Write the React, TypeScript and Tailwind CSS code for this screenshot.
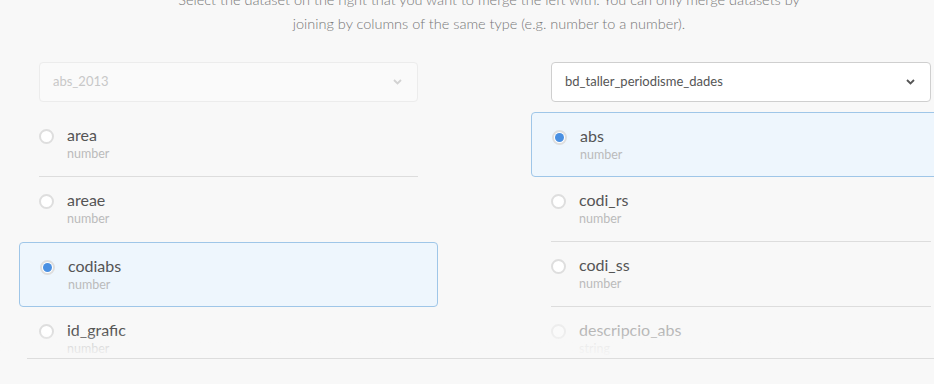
import React from 'react';

type Col = { name: string; type: string; selected?: boolean; disabled?: boolean };

const leftCols: Col[] = [
  { name: 'area', type: 'number' },
  { name: 'areae', type: 'number' },
  { name: 'codiabs', type: 'number', selected: true },
  { name: 'id_grafic', type: 'number' },
];

const rightCols: Col[] = [
  { name: 'abs', type: 'number', selected: true },
  { name: 'codi_rs', type: 'number' },
  { name: 'codi_ss', type: 'number' },
  { name: 'descripcio_abs', type: 'string', disabled: true },
];

function Chevron({ muted }: { muted?: boolean }) {
  return (
    <svg width="9" height="6" viewBox="0 0 9 6" className="shrink-0">
      <path
        d="M1 1l3.5 3.5L8 1"
        fill="none"
        stroke={muted ? '#d2d2d2' : '#555'}
        strokeWidth="1.8"
      />
    </svg>
  );
}

function Select({ value, disabled }: { value: string; disabled?: boolean }) {
  return (
    <div
      className={`h-[40px] flex items-center justify-between pl-[13px] pr-[15px] rounded-[4px] border text-[13px] ${
        disabled ? 'bg-[#fafafa] border-[#ececec] text-[#c8c8c8]' : 'bg-white border-[#cfcfcf] text-[#555]'
      }`}
    >
      <span>{value}</span>
      <Chevron muted={disabled} />
    </div>
  );
}

function Radio({ checked }: { checked?: boolean }) {
  return (
    <span className="w-[15px] h-[15px] rounded-full border-2 border-[#dedede] bg-white flex items-center justify-center shrink-0">
      {checked && <span className="w-[9px] h-[9px] rounded-full bg-[#4a90e2]" />}
    </span>
  );
}

function ColumnList({ cols }: { cols: Col[] }) {
  return (
    <div className="flex flex-col">
      {cols.map((c, i) => {
        const nextSelected = cols[i + 1]?.selected;
        return (
          <div
            key={c.name}
            className={`h-[65px] shrink-0 flex items-start pt-[16px] gap-[13px] ${
              c.selected
                ? '-mx-5 px-5 bg-[#eef6fd] border border-[#9fc6e8] rounded-[4px]'
                : nextSelected
                ? ''
                : 'border-b border-[#dddddd]'
            } ${c.disabled ? 'opacity-40' : ''}`}
          >
            <span className="pt-[1px]">
              <Radio checked={c.selected} />
            </span>
            <div className="flex flex-col -mt-[4px]">
              <span className="text-[16px] leading-[22px] text-[#555]">{c.name}</span>
              <span className="text-[12.5px] leading-[16px] text-[#bbb]">{c.type}</span>
            </div>
          </div>
        );
      })}
    </div>
  );
}

export default function App() {
  return (
    <div
      className="w-[934px] h-[384px] overflow-hidden bg-[#f8f8f8]"
      style={{ fontFamily: 'Lato, "Noto Sans", sans-serif' }}
    >
      <div className="ml-[27px] w-[924px]">
        <p className="-mt-[12px] text-center text-[14.5px] leading-[24px] font-light text-[#777]">
          Select the dataset on the right that you want to merge the left with. You can only merge datasets by
          <br />
          joining by columns of the same type (e.g. number to a number).
        </p>
      </div>

      <div className="flex mt-[26px] pl-[39px] gap-[133px]">
        <div className="w-[379px] shrink-0">
          <Select value="abs_2013" disabled />
        </div>
        <div className="w-[380px] shrink-0">
          <Select value="bd_taller_periodisme_dades" />
        </div>
      </div>

      <div className="relative mt-[10px] h-[246px] overflow-hidden">
        <div className="flex pl-[39px] gap-[133px]">
          <div className="w-[379px] shrink-0">
            <ColumnList cols={leftCols} />
          </div>
          <div className="w-[380px] shrink-0">
            <ColumnList cols={rightCols} />
          </div>
        </div>
        <div className="absolute left-0 right-0 bottom-0 h-[26px] bg-gradient-to-b from-[#f8f8f8]/0 to-[#f8f8f8]" />
      </div>
      <div className="ml-[27px] h-px bg-[#dddddd]" />
    </div>
  );
}
